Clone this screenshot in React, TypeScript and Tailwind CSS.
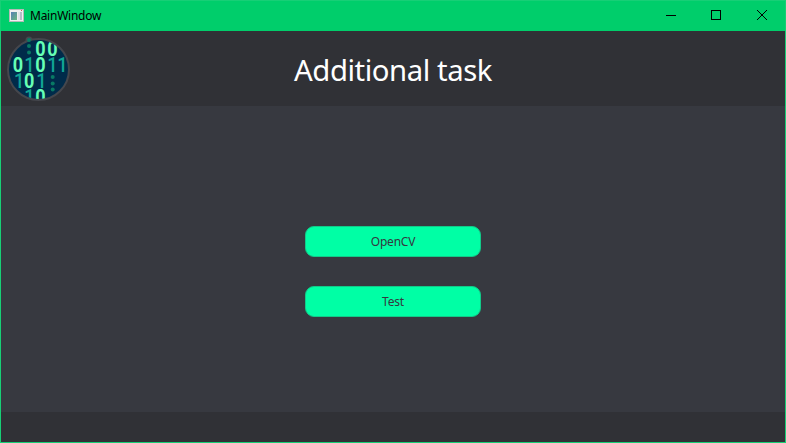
type Digit = { x: number; y: number; value: string; color: string };

const BRIGHT = "#66ffb5";
const TEAL = "#11a496";

const digits: Digit[] = [
  { x: 40.5, y: 56, value: "0", color: BRIGHT },
  { x: 52.5, y: 56, value: "0", color: BRIGHT },
  { x: 18, y: 72, value: "0", color: BRIGHT },
  { x: 29.5, y: 72, value: "1", color: TEAL },
  { x: 40.5, y: 72, value: "0", color: BRIGHT },
  { x: 52.5, y: 72, value: "1", color: TEAL },
  { x: 62.5, y: 72, value: "1", color: TEAL },
  { x: 19.3, y: 88, value: "1", color: TEAL },
  { x: 29.3, y: 88, value: "0", color: BRIGHT },
  { x: 41.5, y: 88, value: "1", color: TEAL },
  { x: 29.5, y: 104, value: "1", color: TEAL },
  { x: 40.5, y: 104, value: "0", color: BRIGHT },
];

const dots = [
  [29, 40],
  [29, 46],
  [29, 52.5],
  [52.7, 77],
  [52.7, 83.5],
  [52.7, 89.5],
];

function BinaryLogo() {
  return (
    <svg className="ml-[5px] h-[70px] w-[66px] shrink-0" viewBox="6 34 66 70">
      <defs>
        <clipPath id="disc">
          <circle cx="38.5" cy="69.5" r="29.5" />
        </clipPath>
      </defs>
      <circle cx="29" cy="40" r="3.5" fill="#45474d" />
      <circle cx="38.5" cy="69.5" r="30.5" fill="#002b4a" stroke="#45474d" strokeWidth="2" />
      <g clipPath="url(#disc)">
        {digits.map((d, i) => (
          <text
            key={i}
            x={d.x}
            y={d.y}
            fill={d.color}
            textAnchor="middle"
            textLength={10.4}
            lengthAdjust="spacingAndGlyphs"
            className={
              d.value === "0"
                ? "font-['Roboto',sans-serif] text-[20px] font-bold"
                : "font-['Roboto',sans-serif] text-[20px] font-medium"
            }
          >
            {d.value}
          </text>
        ))}
      </g>
      {dots.map(([x, y]) => (
        <circle key={`${x}-${y}`} cx={x} cy={y} r="2" fill="#087a64" />
      ))}
    </svg>
  );
}

function WindowIcon() {
  return (
    <svg className="mb-[1px] ml-2 h-[13px] w-4" viewBox="0 0 16 13">
      <defs>
        <linearGradient id="pane" x1="0" y1="0" x2="1" y2="1">
          <stop offset="0" stopColor="#5780b5" />
          <stop offset="1" stopColor="#69b77e" />
        </linearGradient>
      </defs>
      <rect x="0.5" y="0.5" width="14" height="12" fill="#f0f0f0" stroke="#b5bab8" />
      <rect x="2" y="3" width="6" height="8" fill="url(#pane)" />
      <rect x="9" y="3" width="2" height="8" fill="#dfe3e7" />
      <rect x="11" y="3" width="2" height="8" fill="#b4bcc6" />
      <rect x="12" y="1" width="1" height="1" fill="#c45a50" />
    </svg>
  );
}

function TitleBar() {
  return (
    <header className="flex h-[30px] items-center">
      <WindowIcon />
      <span className="ml-[5px] text-[12px] leading-4 tracking-[-0.25px] text-black">MainWindow</span>
      <svg
        className="ml-auto h-[30px] w-[137px]"
        viewBox="0 0 137 30"
        fill="none"
        stroke="#000"
        shapeRendering="crispEdges"
      >
        <path d="M18 14.5h10" />
        <rect x="63.5" y="9.5" width="9" height="9" />
        <path d="M109 9l10 10M119 9l-10 10" shapeRendering="auto" />
      </svg>
    </header>
  );
}

function TaskButton({ label }: { label: string }) {
  return (
    <button className="h-[31px] w-[176px] rounded-[9px] border border-[#12ca89] bg-[#00ffa5] text-[12px] leading-4 tracking-[-0.2px] text-[#35373f]">
      {label}
    </button>
  );
}

export default function App() {
  return (
    <div className="flex h-[443px] w-[786px] flex-col border border-[#17cf76] bg-[#00ce6b] font-['Noto_Sans',sans-serif]">
      <TitleBar />
      <div className="grid h-[75px] grid-cols-[71px_1fr_71px] items-center bg-[#303136]">
        <BinaryLogo />
        <h1 className="pt-0.5 text-center text-[29.3px] leading-10 tracking-[-0.45px] whitespace-nowrap text-white">
          Additional task
        </h1>
      </div>
      <main className="flex h-[306px] flex-col items-center justify-center gap-[29px] bg-[#373940] pt-[25px]">
        <TaskButton label="OpenCV" />
        <TaskButton label="Test" />
      </main>
      <footer className="h-[30px] bg-[#303136]" />
    </div>
  );
}
